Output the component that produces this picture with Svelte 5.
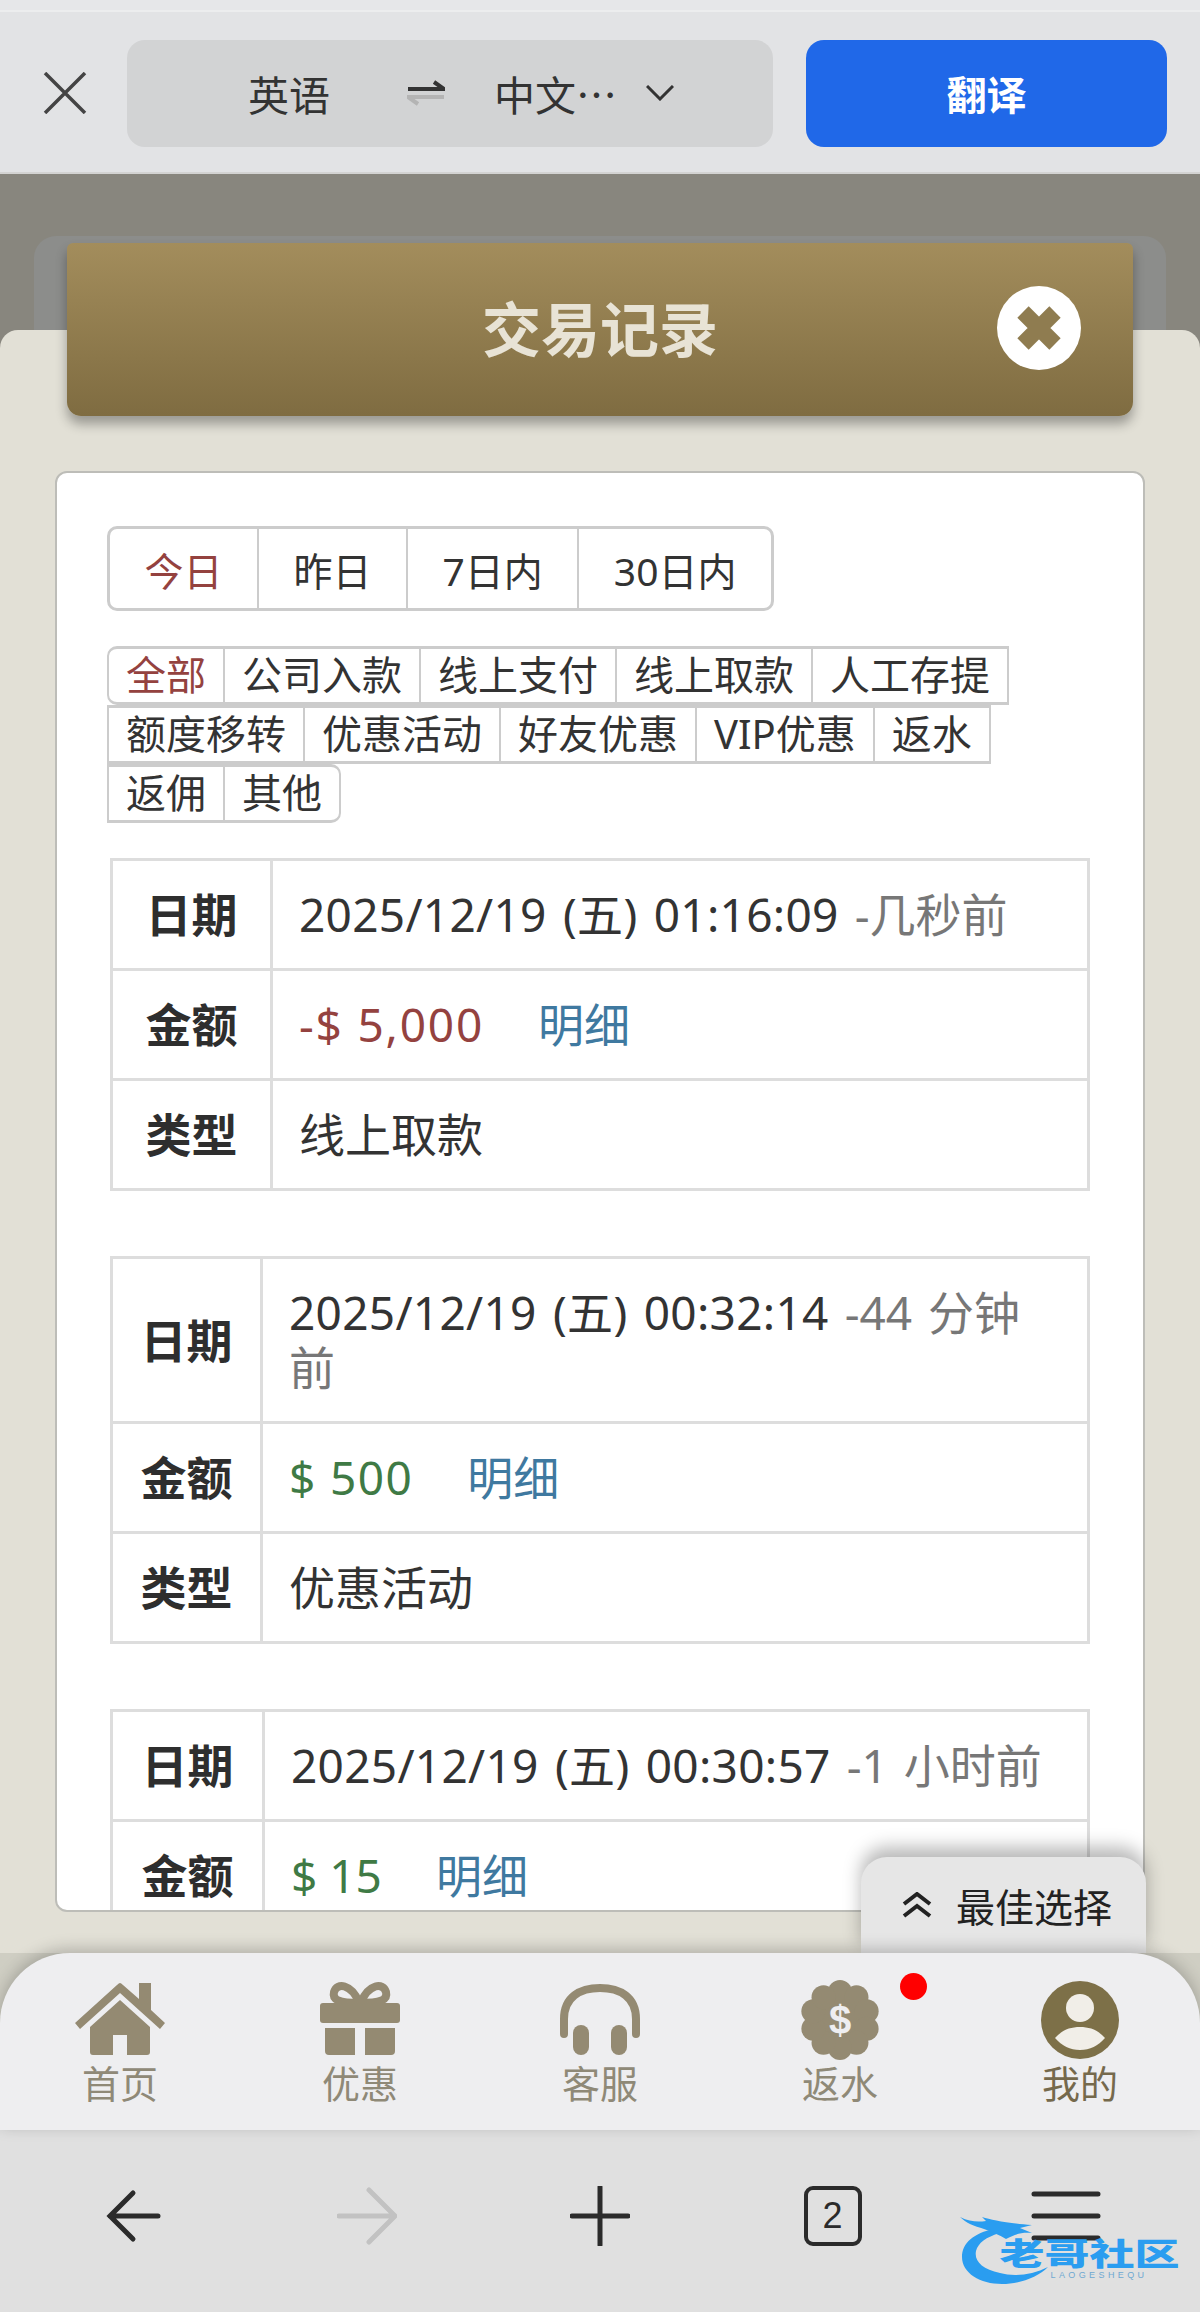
<script>
  const dateTabs = ['今日', '昨日', '7日内', '30日内'];
  const filterRows = [
    ['全部', '公司入款', '线上支付', '线上取款', '人工存提'],
    ['额度移转', '优惠活动', '好友优惠', 'VIP优惠', '返水'],
    ['返佣', '其他']
  ];
  const records = [
    { wide: true, date: '2025/12/19 (五) 01:16:09', ago: '-几秒前', amount: '-$ 5,000', neg: true, type: '线上取款' },
    { wide: false, date: '2025/12/19 (五) 00:32:14', ago: '-44 分钟前', amount: '$ 500', neg: false, type: '优惠活动' },
    { wide: false, date: '2025/12/19 (五) 00:30:57', ago: '-1 小时前', amount: '$ 15', neg: false, type: '' }
  ];
  const lobes = Array.from({ length: 10 }, (_, i) => {
    const a = (i * Math.PI) / 5 - Math.PI / 2;
    return { x: 40 + 28 * Math.cos(a), y: 40 + 28 * Math.sin(a) };
  });
</script>

<div class="page">
  <header class="translate">
    <svg class="x" width="44" height="42" viewBox="0 0 44 42"><path d="M2 1 L42 41 M42 1 L2 41" /></svg>
    <div class="lang">
      <span class="src">英语</span>
      <svg class="swap" width="38" height="26" viewBox="0 0 38 26">
        <path class="on" d="M1 9 H37 L27 2" />
        <path class="off" d="M37 17 H1 L11 24" />
      </svg>
      <span class="dst">中文…</span>
      <svg class="chev" width="28" height="16" viewBox="0 0 28 16"><path d="M1 1 L14 14 L27 1" /></svg>
    </div>
    <div class="go">翻译</div>
  </header>

  <main class="stage">
    <div class="back"></div>
    <section class="cream">
      <div class="head">
        <h1>交易记录</h1>
        <svg class="close" width="84" height="84" viewBox="0 0 84 84">
          <circle cx="42" cy="42" r="42" fill="#fff" />
          <path d="M26 26 L58 58 M58 26 L26 58" />
        </svg>
      </div>
      <div class="card">
        <div class="tabs">
          {#each dateTabs as t, i}
            <span class="tab" class:active={i === 0}>{t}</span>
          {/each}
        </div>
        <div class="filters">
          {#each filterRows as row, r}
            {#each row as f, i}
              <span class="filter" class:active={r === 0 && i === 0} class:tl={r === 0 && i === 0} class:br={r === 2 && i === 1}>{f}</span>
            {/each}
          {/each}
        </div>
        {#each records as rec}
          <table class:wide={rec.wide} class:short={!rec.type}>
            <tbody>
              <tr><th>日期</th><td><span class="when">{rec.date}</span> <span class="ago">{rec.ago}</span></td></tr>
              <tr>
                <th>金额</th>
                <td class="money"><span class={rec.neg ? 'neg' : 'pos'}>{rec.amount}</span><span class="more">明细</span></td>
              </tr>
              {#if rec.type}
                <tr><th>类型</th><td>{rec.type}</td></tr>
              {/if}
            </tbody>
          </table>
        {/each}
      </div>
    </section>
  </main>

  <div class="dock">
    <div class="quick">
      <svg width="32" height="26" viewBox="0 0 32 26"><path d="M3 12 L16 2 L29 12 M3 24 L16 14 L29 24" /></svg>
      <span>最佳选择</span>
    </div>
    <nav class="nav">
      <div class="item">
        <svg width="90" height="80" viewBox="0 0 90 80">
          <path d="M45 3 Q46 3 48 5 L64 19 V3 H76 V30 L90 43 L85 49 L45 13 L5 49 L0 43 L42 5 Q44 3 45 3 Z" />
          <path d="M45 20 L75 47 V72 Q75 75 72 75 H52 V55 H38 V75 H18 Q15 75 15 72 V47 Z" />
        </svg>
        <span>首页</span>
      </div>
      <div class="item">
        <svg width="90" height="80" viewBox="0 0 90 80">
          <path class="bow" d="M44 22 C36 4 22 2 19 12 C17 20 24 23 44 23 C66 23 73 20 71 12 C68 2 54 4 46 22" />
          <path d="M5 26 Q5 23 8 23 H82 Q85 23 85 26 V40 Q85 43 82 43 H8 Q5 43 5 40 Z" />
          <path d="M10 48 H40 V75 H14 Q10 75 10 71 Z" />
          <path d="M50 48 H80 V71 Q80 75 76 75 H50 Z" />
        </svg>
        <span>优惠</span>
      </div>
      <div class="item">
        <svg width="90" height="80" viewBox="0 0 90 80">
          <path class="arc" d="M9 54 V39 C9 17 25 8 45 8 C65 8 81 17 81 39 V54" />
          <rect x="18" y="45" width="16" height="30" rx="8" />
          <rect x="56" y="45" width="16" height="30" rx="8" />
        </svg>
        <span>客服</span>
      </div>
      <div class="item">
        <svg width="90" height="80" viewBox="0 0 80 80" class="flower">
          <circle cx="40" cy="40" r="30" />
          {#each lobes as l}
            <circle cx={l.x} cy={l.y} r="12" />
          {/each}
          <text x="40" y="54" text-anchor="middle">$</text>
        </svg>
        <i class="dot"></i>
        <span>返水</span>
      </div>
      <div class="item me">
        <svg width="90" height="80" viewBox="0 0 80 80">
          <circle cx="40" cy="40" r="39" />
          <circle class="w" cx="40" cy="28" r="14" />
          <path class="w" d="M15 58 C22 50 30 47 40 47 C50 47 58 50 65 58 C58 66 50 70 40 70 C30 70 22 66 15 58 Z" />
        </svg>
        <span>我的</span>
      </div>
    </nav>
  </div>

  <footer class="browser">
    <svg width="60" height="60" viewBox="0 0 60 60"><path d="M54 30 H6 M29 7 L6 30 L29 53" /></svg>
    <svg class="dim" width="60" height="60" viewBox="0 0 60 60"><path d="M2 30 H54 M32 4 L58 30 L32 56" /></svg>
    <svg width="60" height="60" viewBox="0 0 60 60"><path d="M2 30 H58 M30 1 V59" /></svg>
    <div class="count">2</div>
    <div class="menu">
      <svg width="70" height="50" viewBox="0 0 70 50"><path d="M3 3 H67 M3 25 H67 M3 47 H67" /></svg>
      <div class="mark">
        <svg width="100" height="68" viewBox="0 0 100 68">
          <path class="sw" d="M34 12 C14 16 2 26 2 40 C2 56 20 67 42 67 C60 67 78 60 88 50 C72 58 54 60 40 56 C22 52 14 44 16 34 C18 26 26 20 40 16 Z" />
          <path class="sw" d="M0 0 C10 5 18 5 26 4 L22 0 C32 3 46 6 72 8 L60 11 L72 16 C60 15 54 18 46 22 C40 18 32 15 24 12 C14 9 6 6 0 0 Z" />
        </svg>
        <b>老哥社区</b>
        <small>LAOGESHEQU</small>
      </div>
    </div>
  </footer>
</div>

<style>
  :global(body) { margin: 0; }
  .page {
    width: 1200px; height: 2312px; display: flex; flex-direction: column; overflow: hidden;
    font-family: "Noto Sans", "Noto Sans CJK SC", sans-serif; color: #333;
  }

  .translate {
    height: 174px; box-sizing: border-box; flex: none; background: #e2e3e5;
    border-bottom: 2px solid #d3d3d2; display: flex; align-items: center; padding: 14px 33px 0 43px;
    box-shadow: inset 0 10px 0 #e6e7e9, inset 0 12px 0 #ecedee;
  }
  .x { margin-right: 40px; flex: none; }
  .x path { fill: none; stroke: #444; stroke-width: 3.5; }
  .lang {
    width: 646px; height: 107px; border-radius: 18px; background: #d2d3d4; flex: none;
    display: flex; align-items: center; box-sizing: border-box; padding-left: 121px;
    font-size: 41px; color: #333;
  }
  .swap { margin: 0 0 0 77px; }
  .swap path { fill: none; stroke-width: 4; }
  .swap .on { stroke: #333; }
  .swap .off { stroke: #b4b4b4; }
  .dst { margin-left: 49px; width: 123px; white-space: nowrap; font-family: "Noto Sans CJK SC", sans-serif; }
  .chev { margin-left: 29px; }
  .chev path { fill: none; stroke: #333; stroke-width: 3; }
  .go {
    margin-left: 33px; width: 361px; height: 107px; border-radius: 18px; background: #2068e8; flex: none;
    color: #fff; font-weight: 700; font-size: 40px; display: flex; align-items: center; justify-content: center;
  }

  .stage { flex: 1; min-height: 0; display: flex; flex-direction: column; background: #88867e; padding-top: 62px; overflow: hidden; }
  .back { height: 94px; margin: 0 34px; flex: none; background: #8c8d8b; border-radius: 22px 22px 0 0; }
  .cream { flex: 1; background: #e2e0d6; border-radius: 18px 18px 0 0; }
  .head {
    position: relative; height: 173px; margin: -87px 67px 0; border-radius: 6px 6px 14px 14px;
    background: linear-gradient(#a38d5c, #7f6c41); box-shadow: 0 8px 12px rgba(0, 0, 0, .32);
    display: flex; align-items: center; justify-content: center; padding-bottom: 6px; box-sizing: border-box;
  }
  h1 { margin: 0; font-size: 59px; font-weight: 700; color: #e8e3d5; }
  .close { position: absolute; left: 930px; top: 43px; }
  .close path { fill: none; stroke: #8f7c50; stroke-width: 16; }

  .card {
    margin: 55px 55px 0; height: 1441px; box-sizing: border-box; overflow: hidden;
    background: #fff; border: 2px solid #bdbdb8; border-radius: 12px; padding: 53px 53px 0 50px;
  }
  .tabs { display: inline-flex; height: 85px; border: 3px solid #ccc; border-radius: 10px; box-sizing: border-box; }
  .tab {
    display: flex; align-items: center; padding: 0 34.5px; font-size: 39px; color: #333;
    border-left: 2px solid #ccc; box-sizing: border-box;
  }
  .tab:first-child { border-left: 0; }
  .active { color: #94423f !important; }

  .filters { display: flex; flex-wrap: wrap; margin-top: 35px; }
  .filter {
    height: 59px; box-sizing: border-box; padding: 0 17px; font-size: 40px; line-height: 52px; color: #333;
    border: 2px solid #ccc; border-top-width: 3px; border-bottom-width: 3px; margin-right: -2px; white-space: nowrap;
  }
  .tl { border-radius: 10px 0 0 10px; }
  .br { border-radius: 0 10px 10px 0; }

  table {
    width: 980px; margin: 35px 0 65px 3px; border-collapse: collapse; table-layout: fixed;
    font-size: 46px; line-height: 55px; color: #333;
  }
  .filters + table { margin-top: 35px; }
  table + table { margin-top: 0; }
  th, td { border: 3px solid #ddd; padding: 26px 38px 26px 26px; text-align: left; word-spacing: 4px; }
  th { width: 95px; padding: 26px; text-align: center; font-weight: 700; color: #2e2e2e; font-size: 46px; }
  table.wide th { width: 105px; }
  table.short th { width: 97px; }
  .when { letter-spacing: .3px; }
  .ago { color: #777; }
  td.money { word-spacing: 0; }
  .neg { color: #94423f; letter-spacing: 1.8px; }
  .pos { color: #3f7a45; letter-spacing: 1.4px; }
  table.short .pos { letter-spacing: 0; }
  .more { color: #3f79a0; margin-left: 54px; }

  .dock { position: relative; flex: none; height: 177px; }
  .quick {
    position: absolute; left: 861px; bottom: 177px; width: 285px; height: 96px; box-sizing: border-box;
    background: #e6e6e6; border-radius: 26px 26px 0 0; box-shadow: 0 -10px 18px rgba(0, 0, 0, .28);
    display: flex; align-items: center; gap: 23px; padding: 0 0 0 40px; font-size: 39px; color: #222;
    white-space: nowrap;
  }
  .quick svg { flex: none; }
  .quick path { fill: none; stroke: #222; stroke-width: 4; }
  .nav {
    position: relative; height: 177px; box-sizing: border-box; padding-top: 27px; background: #eeeef0;
    border-radius: 70px 70px 0 0; box-shadow: 0 -4px 16px rgba(0, 0, 0, .22);
    display: grid; grid-template-columns: repeat(5, 1fr);
  }
  .dock::before { content: ""; position: absolute; left: 0; right: 0; top: 0; height: 70px; background: #cfcec3; }
  .item { position: relative; display: flex; flex-direction: column; align-items: center; color: #8f8977; font-size: 38px; line-height: 46px; }
  .item svg { display: block; fill: #948a72; }
  .item .bow { fill: none; stroke: #948a72; stroke-width: 8; }
  .item .arc { fill: none; stroke: #948a72; stroke-width: 8; stroke-linecap: round; }
  .flower text { fill: #eeeef0; font-size: 40px; font-weight: 800; font-family: "Liberation Sans", sans-serif; }
  .me { color: #75694c; }
  .me svg { fill: #7d7048; }
  .me .w { fill: #f1eee8; }
  .dot { position: absolute; left: 180px; top: -7px; width: 27px; height: 27px; border-radius: 50%; background: #f00; }

  .browser {
    height: 182px; flex: none; background: #e0e0e0; display: grid; grid-template-columns: repeat(5, 233px);
    padding: 0 17px 10px 17px; box-sizing: border-box; align-items: center; justify-items: center;
  }
  .browser svg path { fill: none; stroke: #2b2b2b; stroke-width: 5; stroke-linecap: round; }
  .browser svg.dim path { stroke: #c2c2c2; }
  .count {
    width: 58px; height: 60px; box-sizing: border-box; border: 4px solid #2b2b2b; border-radius: 9px;
    display: flex; align-items: center; justify-content: center; font-size: 36px; color: #2b2b2b;
    font-family: "Liberation Sans", sans-serif;
  }
  .menu { position: relative; height: 50px; }
  .menu > svg { display: block; }
  .mark { position: absolute; left: -71px; top: 26px; width: 224px; height: 68px; color: #2f9ff0; }
  .mark svg { position: absolute; left: 0; top: 0; }
  .mark .sw { fill: #2a9df0; stroke: none; }
  .mark b {
    position: absolute; left: 40px; top: 15px; font-size: 45px; line-height: 40px; font-weight: 900; white-space: nowrap;
    color: #2a9df0; font-family: "Noto Sans CJK SC", sans-serif; transform: scaleY(.68); transform-origin: center;
  }
  .mark small { position: absolute; left: 91px; top: 53px; font-size: 9px; line-height: 10px; letter-spacing: 3.4px; color: #6fa9d2; font-family: "Liberation Sans", sans-serif; }
</style>
